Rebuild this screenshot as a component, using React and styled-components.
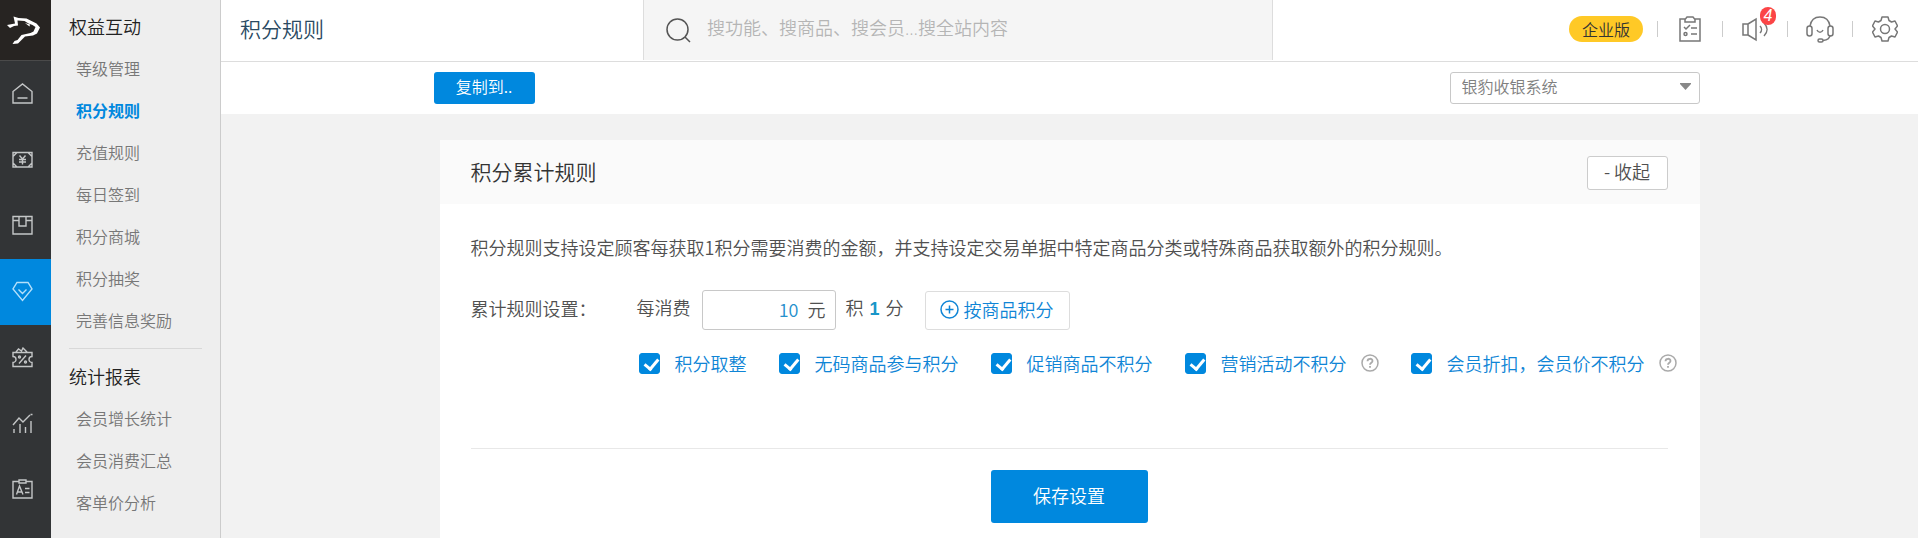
import { useState } from "react";
import styled, { createGlobalStyle } from "styled-components";


const GlobalStyle = createGlobalStyle`
    * {
        box-sizing: border-box;
    }
    body {
        margin: 0;
        background-color: #f2f2f2;
        color: #505050;
        font-family: "Noto Sans CJK SC", sans-serif;
        font-size: 18px;
        font-weight: 350;
    }
    button, input, select {
        font: inherit;
        color: inherit;
    }
    a {
        color: inherit;
        text-decoration: none;
    }
`

const Page = styled.div`
    display: flex;
    min-height: 100vh;
`

const Rail = styled.nav`
    flex: none;
    width: 51px;
    background-color: #323436;
`

const Logo = styled.a`
    display: block;
    height: 61px;
    background-color: #272422;
    border-bottom: 1px solid #4a4a4a;
    svg {
        display: block;
    }
`

const RailLink = styled.a`
    display: flex;
    align-items: center;
    height: 66px;
    padding: 0 0 2px 12px;
    color: ${props => props.$active ? "#b5e0fa" : "#c4c6c7"};
    background-color: ${props => props.$active ? "#0088de" : "transparent"};
`

const SubMenu = styled.nav`
    flex: none;
    width: 170px;
    padding-top: 5px;
    background-color: #eee;
    border-right: 1px solid #ccc;
    hr {
        height: 1px;
        margin: 7px 18px 6px;
        border: 0;
        background-color: #d8d8d8;
    }
`

const MenuTitle = styled.h2`
    margin: 0;
    padding-left: 18px;
    color: #222;
    font-size: 18px;
    font-weight: 350;
    line-height: 42px;
`

const MenuLink = styled.a`
    display: block;
    padding-left: 25px;
    color: ${props => props.$active ? "#0088de" : "#777"};
    font-size: 16px;
    font-weight: ${props => props.$active ? 700 : 350};
    line-height: 42px;
`

const Main = styled.main`
    display: flex;
    flex-direction: column;
    flex: 1;
    min-width: 0;
`

const Header = styled.header`
    display: grid;
    grid-template-columns: 422fr 630fr 645fr;
    height: 62px;
    padding-bottom: 1px;
    background-color: white;
    border-bottom: 1px solid #ddd;
`

const PageTitle = styled.h1`
    margin: 0;
    padding-left: 19px;
    color: #2a4a62;
    font-size: 21px;
    font-weight: 350;
    line-height: 56px;
`

const Search = styled.label`
    display: flex;
    align-items: center;
    gap: 16px;
    padding-left: 22px;
    color: #555;
    background-color: #f5f5f5;
    border-left: 1px solid #ddd;
    border-right: 1px solid #ddd;
    input {
        flex: 1;
        min-width: 0;
        height: 58px;
        padding: 0 0 4px;
        background: none;
        border: 0;
        outline: 0;
        font-family: "Open Sans", "Noto Sans CJK SC", sans-serif;
    }
    input::placeholder {
        color: #b5b5b5;
        opacity: 1;
    }
`

const Tools = styled.div`
    display: flex;
    align-items: center;
    justify-content: flex-end;
    padding: 0 1px 2px 0;
`

const Edition = styled.span`
    margin-right: 14px;
    padding: 0 13px;
    border-radius: 13px;
    background-color: #ffc926;
    color: #333;
    font-size: 16px;
    line-height: 26px;
`

const Tool = styled.button`
    display: flex;
    align-items: center;
    width: 65px;
    height: 40px;
    padding: 0;
    border: 0;
    background: none;
    color: #777;
    &::before {
        content: "";
        width: 1px;
        height: 16px;
        background-color: #ccc;
    }
`

const ToolIcon = styled.span`
    position: relative;
    display: flex;
    margin: 0 auto;
`

const Count = styled.span`
    position: absolute;
    top: -9px;
    right: -8px;
    width: 16px;
    height: 18px;
    border-radius: 8px;
    background-color: #fb4546;
    color: white;
    font-family: "Liberation Sans", sans-serif;
    font-size: 16px;
    font-style: italic;
    font-weight: 400;
    line-height: 18px;
    text-align: center;
`

const Toolbar = styled.div`
    padding: 10px 0;
    background-color: white;
`

const ToolbarInner = styled.div`
    display: flex;
    justify-content: space-between;
    max-width: 1272px;
    margin: 0 auto;
    padding-right: 6px;
`

const CopyButton = styled.button`
    width: 101px;
    height: 32px;
    padding: 0 0 4px;
    border: 0;
    border-radius: 3px;
    background-color: #0088de;
    color: white;
    font-size: 16px;
    line-height: 28px;
`

const StoreSelect = styled.div`
    position: relative;
    width: 250px;
    select {
        display: block;
        appearance: none;
        width: 100%;
        height: 32px;
        padding: 0 30px 4px 11px;
        border: 1px solid #c8c8c8;
        border-radius: 3px;
        background-color: white;
        color: #808080;
        font-size: 16px;
    }
    svg {
        position: absolute;
        top: 11px;
        right: 9px;
        pointer-events: none;
    }
`

const Panel = styled.section`
    flex: 1;
    width: 100%;
    max-width: 1260px;
    margin: 26px auto 0;
    background-color: white;
`

const PanelHeader = styled.div`
    display: flex;
    align-items: center;
    justify-content: space-between;
    height: 64px;
    padding: 2px 32px 0 31px;
    background-color: #fafafa;
    h2 {
        margin: 0;
        padding-bottom: 4px;
        color: #333;
        font-size: 21px;
        font-weight: 350;
        line-height: 58px;
    }
`

const FoldButton = styled.button`
    width: 81px;
    height: 34px;
    padding: 0 0 4px;
    border: 1px solid #ccc;
    border-radius: 3px;
    background-color: white;
    line-height: 28px;
`

const PanelBody = styled.div`
    padding: 28px 32px 15px 31px;
`

const Intro = styled.p`
    margin: 0;
    line-height: 30px;
`

const RuleRow = styled.div`
    display: flex;
    align-items: center;
    height: 40px;
    margin-top: 28px;
`

const RuleLabel = styled.div`
    width: 166px;
    padding-bottom: 4px;
`

const Unit = styled.span`
    padding-bottom: 6px;
    b {
        margin: 0 6px;
        color: #1896c8;
        font-family: "Liberation Sans", sans-serif;
        font-weight: 700;
    }
`

const Amount = styled.label`
    display: flex;
    align-items: center;
    width: 134px;
    height: 40px;
    margin: 0 10px 0 11px;
    padding: 0 9px 2px 0;
    border: 1px solid #c8c8c8;
    border-radius: 3px;
    input {
        flex: 1;
        min-width: 0;
        margin-right: 9px;
        padding: 0;
        border: 0;
        outline: 0;
        background: none;
        color: #2590cc;
        text-align: right;
    }
`

const GoodsButton = styled.button`
    display: flex;
    align-items: center;
    gap: 5px;
    height: 39px;
    margin-left: 21px;
    padding: 0 15px 2px 14px;
    border: 1px solid #ddd;
    border-radius: 3px;
    background-color: white;
    color: #0f85d6;
`

const Options = styled.div`
    display: flex;
    flex-wrap: wrap;
    gap: 12px 32px;
    margin: 19px -24px 0 168px;
`

const Option = styled.div`
    display: flex;
    align-items: center;
    height: 28px;
    color: #0f85d6;
    label {
        display: flex;
        align-items: center;
        gap: 15px;
    }
`

const CheckBox = styled.input`
    appearance: none;
    flex: none;
    width: 21px;
    height: 21px;
    margin: 0;
    border: 1px solid #0088de;
    border-radius: 3px;
    background-color: white;
    &:checked {
        background-color: #0088de;
    }
    &:checked::before {
        content: "";
        display: block;
        width: 6px;
        height: 11px;
        margin: 2px 0 0 7px;
        border: solid white;
        border-width: 0 3px 3px 0;
        transform: rotate(40deg);
    }
`

const HelpButton = styled.button`
    display: flex;
    margin-left: 14px;
    padding: 0;
    border: 0;
    background: none;
    color: #aaa;
`

const Footer = styled.div`
    display: flex;
    justify-content: center;
    margin-top: 71px;
    padding-top: 21px;
    border-top: 1px solid #e8e8e8;
`

const SaveButton = styled.button`
    width: 157px;
    height: 53px;
    padding: 0 0 4px;
    border: 0;
    border-radius: 3px;
    background-color: #0088de;
    color: white;
`

function Icon(props) {
    return (
        <svg
            width={props.size || 21}
            height={props.size || 21}
            viewBox={props.box || "0 0 21 21"}
            fill="none"
            stroke="currentColor"
            strokeWidth={props.stroke || 1.4}
            aria-hidden="true"
        >
            {props.children}
        </svg>
    )
}

const railItems = [
    { name: "首页", icon: <Icon><path d="M1 20V8.500L10.500 1 20 8.500V20ZM5.500 15h10" /></Icon> },
    { name: "收银", icon: <Icon><path d="M1 3.500h19v14.500H1ZM1 7.500l4-4M20 7.500l-4-4M1 14l4 4M20 14l-4 4M7.500 6.500l3 3.500 3-3.500M7 10.500h7M7 13h7M10.500 10v5.500" /></Icon> },
    { name: "商品", icon: <Icon><path d="M1 1.500h19V19H1ZM1 5.500h6M14 5.500h6M7 1.500V11h7V1.500" /></Icon> },
    { name: "会员", active: true, icon: <Icon><path d="M5 1.500h11L20 8l-9.500 11.500L1 8ZM6.500 8.500l4 4 4-4" /></Icon> },
    { name: "营销", icon: <Icon><path d="M1 5.500h19v4a3 3 0 0 0 0 6v4H1v-4a3 3 0 0 0 0-6ZM4 5l2.500-3 3 2L11 1l4 4M14 8.500l-7 8" /><circle cx="7.500" cy="10" r="1" /><circle cx="13.500" cy="15" r="1" /></Icon> },
    { name: "报表", icon: <Icon><path d="M1 12l6-7 4 4 7-7M2 20v-4M8 20V11M13.500 20v-6M19 20V8M18.500 1.500h2" /></Icon> },
    { name: "员工", icon: <Icon><path d="M7 2.500H1V19h19V2.500h-6M7 1h7v3H7ZM4.500 15.500 7.500 7l3.500 8.500M5.500 13h4.500M13 9.500h4.500M13 13.500h4.500" /></Icon> },
]

const memberLinks = ["等级管理", "积分规则", "充值规则", "每日签到", "积分商城", "积分抽奖", "完善信息奖励"]
const reportLinks = ["会员增长统计", "会员消费汇总", "客单价分析"]

const options = [
    { name: "积分取整" },
    { name: "无码商品参与积分" },
    { name: "促销商品不积分" },
    { name: "营销活动不积分", help: true },
    { name: "会员折扣，会员价不积分", help: true },
]

function HeaderTools() {
    return (
        <Tools>
            <Edition>企业版</Edition>
            <Tool aria-label="任务">
                <ToolIcon>
                    <Icon size={26} box="0 0 26 26" stroke={1.5}>
                        <path d="M8 3H3v22h20V3h-5M8 6V3.500L10 1h6l2 2.500V6ZM7 11l2 2 4-4M14 12h6M14 18h6" />
                        <circle cx="8.500" cy="18" r="1.500" />
                    </Icon>
                </ToolIcon>
            </Tool>
            <Tool aria-label="消息">
                <ToolIcon>
                    <Icon size={26} box="0 0 26 26" stroke={1.5}>
                        <path d="M1 8h5v11H1ZM6 8l8-5v21l-8-5M18 10c2 2 2 5 0 7M22 7c4 4 4 9 0 13" />
                    </Icon>
                    <Count>4</Count>
                </ToolIcon>
            </Tool>
            <Tool aria-label="客服">
                <ToolIcon>
                    <Icon size={28} box="0 0 28 28" stroke={1.5}>
                        <path d="M4 11C5 5 9 2 14 2s9 3 10 9M24 20c0 4-3 5-7 5.500M11 15c1.500 3 4.500 3 6 0" />
                        <rect x="1" y="11" width="5" height="10" rx="2.500" />
                        <rect x="22" y="11" width="5" height="10" rx="2.500" />
                        <rect x="12" y="24" width="5" height="3" rx="1.500" />
                    </Icon>
                </ToolIcon>
            </Tool>
            <Tool aria-label="设置">
                <ToolIcon>
                    <Icon size={26} box="0 0 26 26" stroke={1.5}>
                        <path strokeLinejoin="round" d="M10 1h6l1 3.500 2.500 1.500L23 5l2.500 5-2.500 3 2.500 3L23 21l-3.500-1L17 21.500 16 25h-6l-1-3.500L6.500 20 3 21 .5 16 3 13 .5 10 3 5l3.500 1L9 4.500Z" />
                        <circle cx="13" cy="13" r="4.500" />
                    </Icon>
                </ToolIcon>
            </Tool>
        </Tools>
    )
}

function RuleOption(props) {
    const [checked, setChecked] = useState(true)
    return (
        <Option>
            <label>
                <CheckBox type="checkbox" checked={checked} onChange={() => setChecked(!checked)} />
                {props.name}
            </label>
            {props.help &&
                <HelpButton aria-label="说明">
                    <Icon size={18} box="0 0 18 18" stroke={1.5}>
                        <circle cx="9" cy="9" r="8" />
                        <path d="M6.500 7.200C6.500 4 11.500 4 11.500 7c0 1.800-2.500 1.800-2.500 3.800M9 12v1.800" strokeWidth="1.800" />
                    </Icon>
                </HelpButton>
            }
        </Option>
    )
}

function App() {
    const [amount, setAmount] = useState("10")
    return (
        <Page>
            <GlobalStyle />
            <Rail>
                <Logo href="#" aria-label="银豹">
                    <svg width="51" height="60" viewBox="0 0 51 60" fill="white" aria-hidden="true">
                        <path d="M7 25l8-1.500-1.500-7 5 1.500 8 .500 6 3 4 2 3.500 4-3 6-4 2-8 1-4 4-3 3-5.500.5 2-3 3-1 4-5 9-2 3-1.500 2-4.500-3-2-4-1.500-4-2.500-7-.500.500 5-4 .500-4 2Z" />
                        <path d="M25 23l5 1.500-.5 2Z" />
                    </svg>
                </Logo>
                {railItems.map(item => (
                    <RailLink key={item.name} href="#" aria-label={item.name} $active={item.active}>
                        {item.icon}
                    </RailLink>
                ))}
            </Rail>
            <SubMenu>
                <MenuTitle>权益互动</MenuTitle>
                {memberLinks.map(name => (
                    <MenuLink key={name} href="#" $active={name === "积分规则"}>{name}</MenuLink>
                ))}
                <hr />
                <MenuTitle>统计报表</MenuTitle>
                {reportLinks.map(name => (
                    <MenuLink key={name} href="#">{name}</MenuLink>
                ))}
            </SubMenu>
            <Main>
                <Header>
                    <PageTitle>积分规则</PageTitle>
                    <Search>
                        <Icon size={25} box="0 0 25 25" stroke={1.5}>
                            <circle cx="11.500" cy="11.500" r="10.500" />
                            <path d="M19 19l5 5" />
                        </Icon>
                        <input type="text" aria-label="搜索" placeholder="搜功能、搜商品、搜会员…搜全站内容" />
                    </Search>
                    <HeaderTools />
                </Header>
                <Toolbar>
                    <ToolbarInner>
                        <CopyButton>复制到..</CopyButton>
                        <StoreSelect>
                            <select aria-label="门店">
                                <option>银豹收银系统</option>
                            </select>
                            <svg width="11" height="7" viewBox="0 0 11 7" fill="#888" aria-hidden="true">
                                <path d="M0 0h11v1L5.500 7 0 1Z" />
                            </svg>
                        </StoreSelect>
                    </ToolbarInner>
                </Toolbar>
                <Panel>
                    <PanelHeader>
                        <h2>积分累计规则</h2>
                        <FoldButton>- 收起</FoldButton>
                    </PanelHeader>
                    <PanelBody>
                        <Intro>积分规则支持设定顾客每获取1积分需要消费的金额，并支持设定交易单据中特定商品分类或特殊商品获取额外的积分规则。</Intro>
                        <RuleRow>
                            <RuleLabel>累计规则设置：</RuleLabel>
                            <Unit>每消费</Unit>
                            <Amount>
                                <input type="text" aria-label="消费金额" value={amount} onChange={e => setAmount(e.target.value)} />
                                元
                            </Amount>
                            <Unit>积<b>1</b>分</Unit>
                            <GoodsButton>
                                <Icon size={19} box="0 0 19 19" stroke={1.5}>
                                    <circle cx="9.500" cy="9.500" r="8.500" />
                                    <path d="M9.500 5.500v8M5.500 9.500h8" />
                                </Icon>
                                按商品积分
                            </GoodsButton>
                        </RuleRow>
                        <Options>
                            {options.map(option => (
                                <RuleOption key={option.name} name={option.name} help={option.help} />
                            ))}
                        </Options>
                        <Footer>
                            <SaveButton>保存设置</SaveButton>
                        </Footer>
                    </PanelBody>
                </Panel>
            </Main>
        </Page>
    )
}

export default App
